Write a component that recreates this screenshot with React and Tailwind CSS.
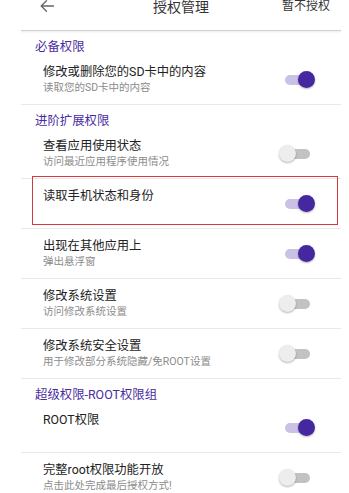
import React from "react";

const FONT = { fontFamily: 'Roboto, "Noto Sans CJK SC", "Noto Sans", sans-serif' };

function Toggle({ on }) {
  return (
    <div className="relative w-[36px] h-[18px] shrink-0">
      <div
        className={
          "absolute left-[6px] right-[5px] top-[4px] h-[10px] rounded-full " +
          (on ? "bg-[#c9c1e6]" : "bg-[#c2c2c2]")
        }
      />
      <div
        className={
          "absolute top-0 w-[17px] h-[17px] rounded-full shadow-[0_1px_2px_rgba(0,0,0,0.3)] " +
          (on ? "right-0 bg-[#4527a0]" : "left-0 bg-[#ededed]")
        }
      />
    </div>
  );
}

function Header({ children }) {
  return (
    <div className="h-[24px] pt-[9px] pl-[14px] text-[12.4px] leading-[14px] text-[#4a2ca0]">
      {children}
    </div>
  );
}

function Divider() {
  return <div className="h-px bg-[#e9e9e9]" />;
}

function Row({ title, sub, on, boxed }) {
  return (
    <div className="relative h-[49px] flex items-center pl-[22px] pr-[26px]">
      <div className="flex-1 self-start pt-[9px]">
        <div className="text-[12.3px] leading-[16px] text-[#222]">{title}</div>
        {sub && (
          <div className="mt-[1px] text-[10.5px] leading-[14px] text-[#8c8c8c]">{sub}</div>
        )}
      </div>
      <Toggle on={on} />
      {boxed && (
        <div className="absolute left-[11px] right-[3px] top-[-3px] bottom-[3px] border-[1.5px] border-[#d63a3f]" />
      )}
    </div>
  );
}

export default function App() {
  return (
    <div className="w-[349px] h-[493px] overflow-hidden bg-white" style={FONT}>
      <div className="ml-[21px] w-[320px]">
        <div className="h-[30px] flex items-start">
          <div className="w-[80px] pl-[19px] pt-[0px]">
            <svg width="14" height="12" viewBox="0 0 14 12" fill="none" stroke="#666" strokeWidth="1.3" strokeLinecap="round" strokeLinejoin="round">
              <path d="M6.5 0.8 L1.2 6 L6.5 11.2 M1.2 6 H13.5" />
            </svg>
          </div>
          <div className="flex-1 text-center text-[14px] leading-[14px] text-[#333]">授权管理</div>
          <div className="w-[80px] text-right pr-[11px] text-[12px] leading-[12px] text-[#333]">暂不授权</div>
        </div>
        <div className="h-px bg-[#d2d2d2] shadow-[0_1px_2px_rgba(0,0,0,0.12)]" />

        <Header>必备权限</Header>
        <Row title="修改或删除您的SD卡中的内容" sub="读取您的SD卡中的内容" on />
        <Divider />

        <Header>进阶扩展权限</Header>
        <Row title="查看应用使用状态" sub="访问最近应用程序使用情况" on={false} />
        <Divider />
        <Row title="读取手机状态和身份" on boxed />
        <Divider />
        <Row title="出现在其他应用上" sub="弹出悬浮窗" on />
        <Divider />
        <Row title="修改系统设置" sub="访问修改系统设置" on={false} />
        <Divider />
        <Row title="修改系统安全设置" sub="用于修改部分系统隐藏/免ROOT设置" on={false} />
        <Divider />

        <Header>超级权限-ROOT权限组</Header>
        <Row title="ROOT权限" on />
        <Divider />
        <Row title="完整root权限功能开放" sub="点击此处完成最后授权方式!" on={false} />
      </div>
    </div>
  );
}
